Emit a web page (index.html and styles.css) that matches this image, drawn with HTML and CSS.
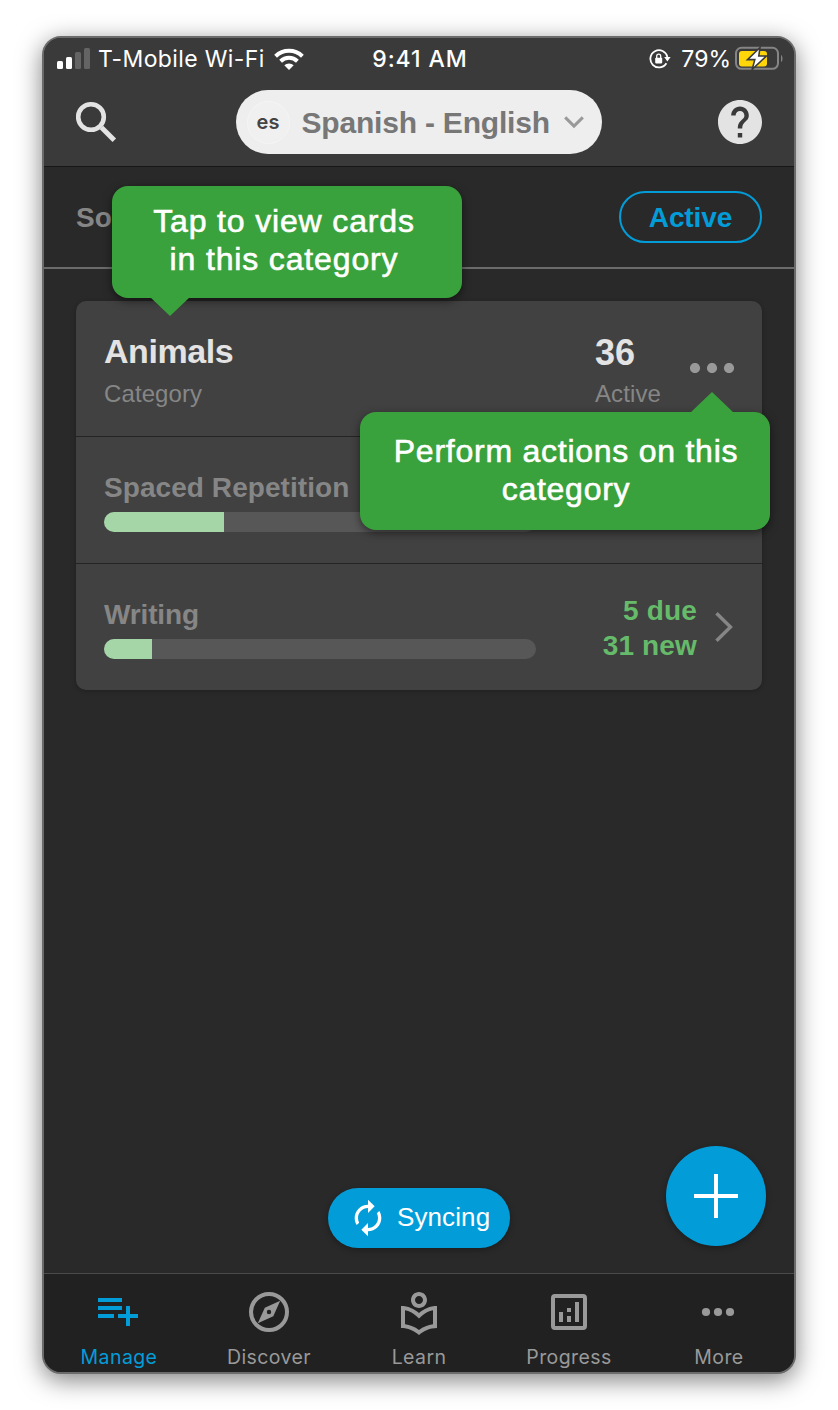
FILE: index.html
```html
<!DOCTYPE html>
<html lang="en">
<head>
<meta charset="utf-8">
<title>Manage</title>
<link rel="stylesheet" href="styles.css">
</head>
<body>
<main class="phone">
  <header class="header">
    <div class="status">
      <div class="carrier">
        <svg class="signal" width="34" height="22" viewBox="0 0 34 22"><rect x="0" y="13" width="6" height="8" rx="1.5" fill="#fff"/><rect x="9" y="9" width="6" height="12" rx="1.5" fill="#fff"/><rect x="18" y="4" width="6" height="17" rx="1.5" fill="#646464"/><rect x="27" y="0" width="6" height="21" rx="1.5" fill="#646464"/></svg>
        <span class="carrier-name">T-Mobile Wi-Fi</span>
        <svg class="wifi" width="30" height="22" viewBox="0 0 30 22" fill="none" stroke="#fff" stroke-width="4"><path d="M1.6 8.2a19.3 19.3 0 0 1 26.8 0"/><path d="M6.6 13.2a12.2 12.2 0 0 1 16.8 0"/><path d="M10.3 17.3a6.8 6.8 0 0 1 9.4 0L15 22Z" fill="#fff" stroke="none"/></svg>
      </div>
      <span class="clock">9:41 AM</span>
      <div class="power">
        <svg class="lock" width="22" height="20" viewBox="0 0 22 20"><path d="M17.4 14.2A8.6 8.6 0 1 1 18.4 8" fill="none" stroke="#fff" stroke-width="1.8"/><path d="M15.2 8h6.4l-3.2 4.4Z" fill="#fff"/><rect x="6.2" y="8.8" width="7" height="5.6" rx=".8" fill="#fff"/><path d="M7.7 9V7.2a2 2 0 0 1 4 0V9" fill="none" stroke="#fff" stroke-width="1.3"/></svg>
        <span class="percent">79%</span>
        <svg class="battery" width="48" height="24" viewBox="0 0 48 24"><rect x="1" y="1.8" width="42" height="21" rx="5.5" fill="none" stroke="#858585" stroke-width="2"/><path d="M46 9c2 1 2 6 0 7Z" fill="#858585"/><rect x="4" y="5" width="28" height="15.5" rx="3" fill="#ffd60a"/><path d="M25 1.5 12.5 13.6h7.3L17.2 23.4 31.4 10h-7.6Z" fill="#fff" stroke="#3a3a3a" stroke-width="1.6"/></svg>
      </div>
    </div>
    <div class="toolbar">
      <svg class="search" width="42" height="42" viewBox="0 0 42 42" fill="none" stroke="#e3e3e3"><circle cx="15" cy="16" r="12.8" stroke-width="4.6"/><path d="M25.5 26.5 38.3 39.3" stroke-width="5"/></svg>
      <button class="deck-picker"><span class="lang">es</span><span class="deck-name">Spanish - English</span><svg width="20" height="13" viewBox="0 0 20 13" fill="none" stroke="#999" stroke-width="3"><path d="m1.2 1.4 8.8 8.7 8.8-8.7"/></svg></button>
      <svg class="help" width="44" height="44" viewBox="2 2 20 20" fill="#e3e3e3"><path d="M12 2C6.48 2 2 6.48 2 12s4.48 10 10 10 10-4.48 10-10S17.52 2 12 2zm1 17h-2v-2h2v2zm2.07-7.75l-.9.92C13.45 12.9 13 13.5 13 15h-2v-.5c0-1.1.45-2.1 1.17-2.83l1.24-1.26c.37-.36.59-.86.59-1.41 0-1.1-.9-2-2-2s-2 .9-2 2H8c0-2.21 1.79-4 4-4s4 1.79 4 4c0 .88-.36 1.68-.93 2.25z"/></svg>
    </div>
  </header>

  <div class="sortbar"><span class="sort">Sort</span><button class="filter">Active</button></div>

  <section class="content">
    <article class="card">
      <div class="card-head">
        <div class="card-title"><h2>Animals</h2><p>Category</p></div>
        <div class="card-count"><strong>36</strong><p>Active</p></div>
        <svg class="dots" width="44" height="10" viewBox="0 0 44 10" fill="#999"><circle cx="5" cy="5" r="5.1"/><circle cx="22" cy="5" r="5.1"/><circle cx="39" cy="5" r="5.1"/></svg>
      </div>
      <div class="mode">
        <div class="mode-main"><h3 class="mode-wide">Spaced Repetition</h3><div class="track"><div class="fill" style="width:120px"></div></div></div>
      </div>
      <div class="mode">
        <div class="mode-main"><h3>Writing</h3><div class="track"><div class="fill" style="width:48px"></div></div></div>
        <div class="due">5 due<br>31 new</div>
        <svg class="chevron" width="18" height="30" viewBox="0 0 18 30" fill="none" stroke="#868686" stroke-width="3.4"><path d="m1.5 1.2 14 13.8-14 13.8"/></svg>
      </div>
    </article>
    <div class="syncing"><svg width="40" height="40" viewBox="0 0 24 24" fill="#fff"><path d="M12 6v3l4-4-4-4v3c-4.42 0-8 3.58-8 8 0 1.57.46 3.03 1.24 4.26L6.7 14.8c-.45-.83-.7-1.79-.7-2.8 0-3.31 2.69-6 6-6zm6.76 1.74L17.3 9.2c.44.84.7 1.79.7 2.8 0 3.31-2.69 6-6 6v-3l-4 4 4 4v-3c4.42 0 8-3.58 8-8 0-1.57-.46-3.03-1.24-4.26z"/></svg><span>Syncing</span></div>
    <button class="fab" aria-label="Add"><svg width="44" height="44" viewBox="0 0 44 44" stroke="#fff" stroke-width="4"><path d="M22 0v44M0 22h44"/></svg></button>
  </section>

  <nav class="tabs">
    <a class="tab tab-on"><svg width="48" height="48" viewBox="-1 0 48 48" fill="currentColor"><path d="M2 10h24v4H2zM2 18h24v4H2zM2 26h16v4H2zM30 18h4v8h8v4h-8v8h-4v-8h-8v-4h8z"/></svg><span>Manage</span></a>
    <a class="tab"><svg width="48" height="48" viewBox="0 0 48 48"><circle cx="24" cy="24" r="18" fill="none" stroke="currentColor" stroke-width="4"/><path fill="currentColor" fill-rule="evenodd" d="M35.2 12.8 19.8 19.8 12.8 35.2 28.3 28.2ZM24 21.8a2.2 2.2 0 1 1 0 4.4 2.2 2.2 0 0 1 0-4.4Z"/></svg><span>Discover</span></a>
    <a class="tab"><svg width="48" height="48" viewBox="0 -1 24 24" fill="currentColor"><path d="M12 9c2.21 0 4-1.79 4-4s-1.79-4-4-4-4 1.79-4 4 1.79 4 4 4zm0-6c1.1 0 2 .9 2 2s-.9 2-2 2-2-.9-2-2 .9-2 2-2zm0 8.55C9.64 9.35 6.48 8 3 8v11c3.48 0 6.64 1.35 9 3.55 2.36-2.19 5.52-3.55 9-3.55V8c-3.48 0-6.64 1.35-9 3.55zm7 5.58c-2.53.34-4.93 1.3-7 2.82-2.06-1.52-4.47-2.49-7-2.83v-6.95c2.1.38 4.05 1.35 5.64 2.83L12 14.28l1.36-1.27c1.59-1.48 3.54-2.45 5.64-2.83v6.95z"/></svg><span>Learn</span></a>
    <a class="tab"><svg width="48" height="48" viewBox="0 0 48 48"><rect x="8" y="8" width="32" height="32" rx="2" fill="none" stroke="currentColor" stroke-width="4"/><path fill="currentColor" d="M14 24h4v10h-4zM22 20h4v4h-4zM22 28h4v6h-4zM30 14h4v20h-4z"/></svg><span>Progress</span></a>
    <a class="tab"><svg width="48" height="48" viewBox="0 0 48 48" fill="currentColor"><circle cx="11" cy="24" r="4.1"/><circle cx="23" cy="24" r="4.1"/><circle cx="35" cy="24" r="4.1"/></svg><span>More</span></a>
  </nav>

  <div class="tip tip-cards">Tap to view cards<br>in this category</div>
  <div class="tip tip-actions">Perform actions on this<br>category</div>
</main>
</body>
</html>
```
FILE: styles.css
```css
* { box-sizing: border-box; }
body { margin: 0; padding: 36px 42px; background: #fff; font-family: "Liberation Sans", Arial, sans-serif; }
h2, h3, p { margin: 0; }
svg { display: block; flex: none; }
button { font: inherit; border: 0; padding: 0; }

.phone { position: relative; display: flex; flex-direction: column; width: 754px; height: 1338px; border: 2px solid #6b6b6b; border-radius: 19px; background: #292929; box-shadow: 0 6px 24px rgba(0, 0, 0, .5); }

.header { height: 129px; background: #3a3a3a; border-bottom: 1px solid #171717; border-radius: 17px 17px 0 0; }
.status { display: grid; grid-template-columns: 1fr auto 1fr; align-items: center; height: 40px; padding: 0 11px 0 13px; color: #fff; font: 23px/42px Inter, sans-serif; }
.carrier { display: flex; align-items: center; }
.signal { margin-right: 7px; }
.carrier-name { letter-spacing: .38px; white-space: nowrap; }
.wifi { margin-left: 9px; }
.clock { font-weight: 500; letter-spacing: .95px; }
.power { display: flex; align-items: center; justify-content: flex-end; }
.percent { margin: 0 4px 0 10px; }
.battery { margin-top: -2px; }

.toolbar { display: flex; align-items: center; justify-content: space-between; height: 88px; padding: 0 32px; }
.deck-picker { display: flex; align-items: center; width: 366px; height: 64px; margin-left: 1px; padding-left: 11px; border-radius: 32px; background: #eee; }
.lang { width: 43px; height: 43px; border: 1px solid #f5f5f5; border-radius: 50%; background: #f0f0f0; color: #444; font: 600 20px/40px Inter, sans-serif; text-align: center; }
.deck-name { margin: 2px 14px 0 12px; color: #777; font-size: 30px; font-weight: 700; letter-spacing: -.2px; white-space: nowrap; }

.sortbar { display: flex; align-items: center; justify-content: space-between; height: 102px; padding: 0 32px; border-bottom: 2px solid #6b6b6b; }
.sort { margin-top: 2px; color: #868686; font-size: 28px; font-weight: 700; }
.filter { width: 143px; height: 52px; border: 2px solid #029dd9; border-radius: 26px; background: none; color: #029dd9; font-size: 28px; font-weight: 700; line-height: 48px; padding-top: 1px; letter-spacing: -.1px; }

.content { position: relative; flex: 1; padding: 32px; }
.card { height: 389px; border-radius: 10px; background: #414141; box-shadow: 0 1px 4px rgba(0, 0, 0, .25); }
.card-head { display: flex; height: 136px; padding: 30px 28px 0; border-bottom: 1px solid #242424; }
.card-title { width: 491px; }
.card-title h2 { color: #e3e3e3; font-size: 34px; line-height: 40px; letter-spacing: -.45px; }
.card-count { width: 95px; }
.card-count strong { display: block; color: #e3e3e3; font-size: 36px; line-height: 43px; }
.card-head p { color: #868686; font-size: 24px; line-height: 46px; letter-spacing: .1px; }
.card-head .card-count p { line-height: 40px; }
.dots { margin-top: 32px; }
.mode { display: flex; height: 127px; padding: 0 28px; border-bottom: 1px solid #242424; }
.mode:last-child { border-bottom: 0; }
.mode-main { width: 432px; padding-top: 34px; }
.mode h3 { color: #868686; font-size: 28px; line-height: 34px; margin-bottom: 7px; letter-spacing: -.15px; }
.mode .mode-wide { letter-spacing: .07px; }
.track { height: 20px; border-radius: 10px; background: #575757; overflow: hidden; }
.fill { height: 20px; background: #a5d6a7; }
.due { width: 161px; padding-top: 29px; color: #66bb6a; font-size: 28px; font-weight: 700; line-height: 35px; letter-spacing: .15px; text-align: right; }
.chevron { margin: 48px 0 0 18px; }

.syncing { position: absolute; left: 284px; bottom: 25px; display: flex; align-items: center; gap: 9px; width: 182px; height: 60px; padding-left: 20px; border-radius: 30px; background: #029dd9; box-shadow: 0 2px 6px rgba(0, 0, 0, .3); color: #fff; font-size: 26px; letter-spacing: .1px; }
.syncing span { margin-top: -2px; }
.fab { position: absolute; right: 28px; bottom: 27px; display: flex; align-items: center; justify-content: center; width: 100px; height: 100px; border-radius: 50%; background: #029dd9; box-shadow: 0 2px 6px rgba(0, 0, 0, .3); }

.tabs { display: grid; grid-template-columns: repeat(5, 1fr); height: 99px; border-top: 1px solid #4b4b4b; border-radius: 0 0 17px 17px; background: #212121; }
.tab { display: flex; flex-direction: column; align-items: center; padding-top: 14px; color: #999; font: 19.5px/24px Inter, sans-serif; letter-spacing: .4px; }
.tab span { margin-top: 9px; }
.tab-on { color: #029dd9; }

.tip { position: absolute; border-radius: 16px; background: #3aa23c; box-shadow: 0 3px 8px rgba(0, 0, 0, .5); color: #fff; font-size: 32px; line-height: 38px; letter-spacing: .75px; text-align: center; -webkit-text-stroke: .6px #fff; }
.tip::after { content: ""; position: absolute; background: #3aa23c; }
.tip-cards { left: 68px; top: 148px; width: 350px; height: 112px; padding: 16px 6px 0 0; letter-spacing: .85px; }
.tip-cards::after { left: 38px; top: 111px; width: 40px; height: 19px; clip-path: polygon(0 0, 100% 0, 50% 100%); }
.tip-actions { left: 316px; top: 374px; width: 410px; height: 118px; padding: 20px 0 0 2px; }
.tip-actions::after { left: 330px; top: -20px; width: 44px; height: 21px; clip-path: polygon(0 100%, 100% 100%, 50% 0); }
```
